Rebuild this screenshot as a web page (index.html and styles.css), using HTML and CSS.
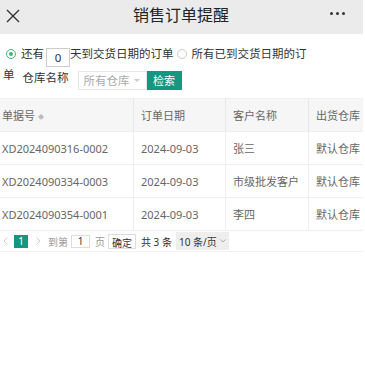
FILE: index.html
```html
<!DOCTYPE html>
<html lang="zh-CN">
<head>
  <meta charset="UTF-8">
  <title>销售订单提醒</title>
  <link rel="stylesheet" href="styles.css">
</head>
<body>
  <div class="page">
    <div class="topbar">
      <span class="close">
        <svg width="14" height="14" viewBox="0 0 14 14"><path d="M1 1L13 13M13 1L1 13" stroke="#333" stroke-width="1.4"/></svg>
      </span>
      <div class="title">销售订单提醒</div>
      <span class="more"><i></i><i></i><i></i></span>
    </div>

    <div class="filter">
      <span class="radio on"></span><span>还有</span><span class="days">0</span><span>天到交货日期的订单</span><span class="radio"></span><span>所有已到交货日期的订单</span><span class="store">
        <label>仓库名称</label>
        <span class="select">所有仓库<b></b></span>
        <button class="search">检索</button>
      </span>
    </div>

    <div class="grid">
      <table>
        <thead>
          <tr><th class="c1">单据号 <em>◆</em></th><th class="c2">订单日期</th><th class="c3">客户名称</th><th class="c4">出货仓库</th></tr>
        </thead>
        <tbody>
          <tr><td>XD2024090316-0002</td><td>2024-09-03</td><td>张三</td><td>默认仓库</td></tr>
          <tr><td>XD2024090334-0003</td><td>2024-09-03</td><td>市级批发客户</td><td>默认仓库</td></tr>
          <tr><td>XD2024090354-0001</td><td>2024-09-03</td><td>李四</td><td>默认仓库</td></tr>
        </tbody>
      </table>
    </div>

    <div class="pager">
      <svg class="prev" width="5" height="8" viewBox="0 0 5 8"><path d="M4.5 0.5L1 4L4.5 7.5" fill="none" stroke="#ccc"/></svg>
      <span class="cur">1</span>
      <svg class="next" width="5" height="8" viewBox="0 0 5 8"><path d="M0.5 0.5L4 4L0.5 7.5" fill="none" stroke="#ccc"/></svg>
      <span class="lbl">到第</span>
      <span class="goto">1</span>
      <span class="lbl page-lbl">页</span>
      <button class="ok">确定</button>
      <span class="total">共 3 条</span>
      <span class="size">10 条/页<svg width="6" height="4" viewBox="0 0 6 4"><path d="M0.5 0.5L3 3L5.5 0.5" fill="none" stroke="#aaa"/></svg></span>
    </div>
  </div>
</body>
</html>
```

FILE: styles.css
```css
body {
  margin: 0;
  background: #fff;
  font-family: "Noto Sans", "Noto Sans CJK SC", sans-serif;
  color: #333;
}
.page { width: 363px; overflow: hidden; }

.topbar {
  height: 34px; background: #ebebeb;
  display: flex; align-items: center; justify-content: space-between;
  padding: 0 18px 0 6px;
}
.close { display: flex; width: 14px; height: 14px; margin-top: -3px; }
.title { font-size: 16px; color: #222; margin-left: 12px; margin-top: -7px; }
.more { display: flex; gap: 3px; margin-top: -8px; }
.more i { width: 3px; height: 3px; border-radius: 50%; background: #333; }

.filter {
  width: 310px;
  font-size: 11.5px; line-height: 16px; color: #333;
  padding: 12px 0 0 3px;
}
.radio {
  display: inline-block; width: 8px; height: 8px;
  border: 1px solid #ccc; border-radius: 50%;
  margin: 0 5px 0 3px; vertical-align: -1px;
  position: relative;
}
.radio.on { border-color: #3cb878; }
.radio.on::after {
  content: ""; position: absolute; left: 2px; top: 2px;
  width: 4px; height: 4px; border-radius: 50%; background: #3cb878;
}
.days {
  display: inline-block; width: 22px; height: 17px; line-height: 17px;
  border: 1px solid #ccc; text-align: center; margin: 0 0 0 2px;
  vertical-align: -4px;
}
.store {
  display: inline-flex; align-items: center; vertical-align: top;
  margin: 4px 0 0 8px;
}
.store label { margin-right: 9px; margin-top: -6px; }
.select {
  box-sizing: border-box;
  display: inline-flex; align-items: center; justify-content: space-between;
  width: 69px; height: 19px; padding: 0 6px 0 5px;
  border: 1px solid #e6e6e6; color: #aaa;
}
.select b {
  border-left: 3px solid transparent; border-right: 3px solid transparent;
  border-top: 3px solid #ccc;
}
.search {
  height: 19px; width: 35px; padding: 0; border: none;
  background: #15977f; color: #fff; font: inherit; font-size: 11px;
}

.grid { margin-top: 8px; border-top: 1px solid #f0f0f0; }
table { border-collapse: collapse; width: 400px; table-layout: fixed; font-size: 11px; color: #666; }
th, td {
  height: 32px; padding: 0 0 0 2px; text-align: left; font-weight: normal;
  border-right: 1px solid #eee; border-bottom: 1px solid #eee;
  white-space: nowrap; overflow: hidden;
}
th { background: #f6f6f6; border-right-color: #e8e8e8; }
td + td, th + th { padding-left: 7px; }
.c1 { width: 131px; }
.c2 { width: 84px; }
.c3 { width: 75px; }
.c4 { width: 90px; }
th em { font-style: normal; font-size: 6px; color: #bbb; vertical-align: 1px; }

.pager {
  display: flex; align-items: center; height: 20px;
  padding: 0 0 0 3px; font-size: 10px; color: #999;
  border-bottom: 1px solid #f0f0f0; white-space: nowrap;
}
.cur {
  width: 14px; height: 13px; line-height: 13px; text-align: center;
  background: #15977f; color: #fff; margin: 0 0 0 6px;
}
.next { margin-left: 8px; }
.lbl { margin-left: 7px; }
.goto {
  box-sizing: border-box;
  width: 19px; height: 13px; line-height: 11px; text-align: center;
  border: 1px solid #ddd; color: #333; margin-left: 3px;
}
.page-lbl { margin-left: 5px; }
.ok {
  box-sizing: border-box;
  margin-left: 3px; padding: 0; width: 28px; height: 15px; font: inherit;
  background: #fff; border: 1px solid #ddd; color: #333;
}
.total { margin-left: 5px; color: #333; }
.size {
  display: flex; align-items: center; gap: 3px;
  margin-left: 4px; height: 18px; padding: 0 3px 0 3px;
  background: #eee; color: #333;
}
```
